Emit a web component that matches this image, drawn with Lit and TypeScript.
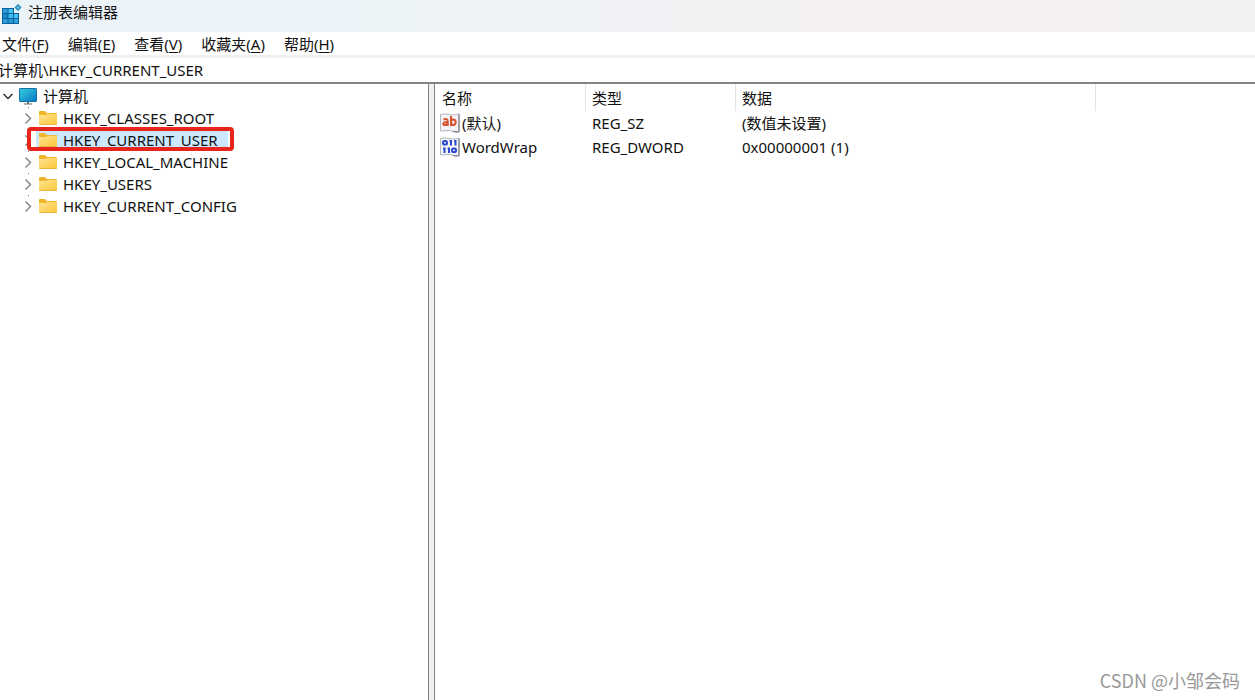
import { LitElement, html, svg, css } from "lit";
import { customElement, state } from "lit/decorators.js";

const appIcon = html`<svg class="app-icon" width="20" height="20" viewBox="0 0 20 20" aria-hidden="true">
  <path d="M0 4h12v5h5v11H0z" fill="#0b6299" />
  <path d="M1 5h4.500v4H1z" fill="#2b9ddd" /><path d="M6.500 5H11v4H6.500z" fill="#45c3f5" />
  <path d="M1 10h4.500v4H1z" fill="#1c86cc" /><path d="M6.500 10H11v4H6.500z" fill="#3fbdf2" /><path d="M12 10h4v4h-4z" fill="#46c4f6" />
  <path d="M1 15h4.500v4H1z" fill="#2c9fdf" /><path d="M6.500 15H11v4H6.500z" fill="#2794d6" /><path d="M12 15h4v4h-4z" fill="#2c9fdf" />
  <path d="M16 0l3.500 3.500L16 7l-3.500-3.500z" fill="#2380b5" /><path d="M16 1.800l1.700 1.700L16 5.200l-1.700-1.700z" fill="#6fc4e8" />
</svg>`;

const computerIcon = html`<svg width="18" height="18" viewBox="0 0 18 18" aria-hidden="true">
  <defs><linearGradient id="screen" x1="0" y1="0" x2="1" y2="1">
    <stop offset="0" stop-color="#35d0e0" /><stop offset="1" stop-color="#0c77c2" />
  </linearGradient></defs>
  <rect x=".5" y="1.500" width="17" height="13" rx=".6" fill="url(#screen)" stroke="#176fa4" />
  <path d="M8 15h2v1.500h3v1H5v-1h3z" fill="#68727b" />
</svg>`;

const folderIcon = html`<svg width="18" height="16" viewBox="0 0 18 16" aria-hidden="true">
  <defs><linearGradient id="folder" x1="0" y1="0" x2="1" y2="1">
    <stop offset="0" stop-color="#ffe391" /><stop offset="1" stop-color="#fbc73a" />
  </linearGradient></defs>
  <path d="M0 2q0-1 1-1h5l2 2h9q1 0 1 1v5H0z" fill="#efb52d" />
  <path d="M0 5h7l1.500-1H18v10q0 1-1 1H1q-1 0-1-1z" fill="url(#folder)" />
  <path d="M.5 14.500h17" stroke="#e7b33c" />
</svg>`;

const paper = svg`
  <path d="M.5 1.500Q5 .2 9 1.500T19 1v18q-3 1-6-.5T7 17.500t-6.500.5z" fill="#f3f4f7" stroke="#b4b7bd" />
  <path d="M19 1.500v17q-3 1-6-.5" fill="none" stroke="#82868d" stroke-width="1.300" />`;

const stringIcon = html`<svg width="20" height="20" viewBox="0 0 20 20" aria-hidden="true">
  ${paper}
  <g fill="none" stroke="#d9502f" stroke-width="2">
    <path d="M3.500 6.500q4.200-1.600 4.200 1.500V13" /><path d="M7.500 9q-4.200 0-4.200 1.700t2 1.400q2.200 0 2.200-2" />
    <path d="M11 3v10" /><ellipse cx="13.300" cy="9.300" rx="2.300" ry="2.700" />
  </g>
</svg>`;

const binaryIcon = html`<svg width="20" height="20" viewBox="0 0 20 20" aria-hidden="true">
  ${paper}
  <g fill="none" stroke="#2b48d0" stroke-width="2">
    <rect x="3" y="4" width="4" height="3.600" rx="1.600" />
    <path d="M11 3v5.500M15.500 3v5.500M4.500 10.500V16M9 10.500V16" />
    <path d="M9.500 4h1M14 4h1M3 11.500h1M7.500 11.500h1" stroke-width="1.500" />
    <rect x="12" y="11.500" width="4" height="3.600" rx="1.600" />
  </g>
</svg>`;

const chevronRight = html`<svg width="8" height="12" viewBox="0 0 8 12" aria-hidden="true">
  <path d="M1.500 1.500L6.500 6.500l-5 5" fill="none" stroke="#8b8b8b" stroke-width="1.500" /></svg>`;
const chevronDown = html`<svg width="12" height="8" viewBox="0 0 12 8" aria-hidden="true">
  <path d="M1.500 2L6 6.500 10.500 2" fill="none" stroke="#333" stroke-width="1.500" /></svg>`;

@customElement("app-root")
export class RegistryEditor extends LitElement {
  @state() private selected = "HKEY_CURRENT_USER";
  @state() private expanded = true;

  private menus = [["文件", "F"], ["编辑", "E"], ["查看", "V"], ["收藏夹", "A"], ["帮助", "H"]];
  private hives = ["HKEY_CLASSES_ROOT", "HKEY_CURRENT_USER", "HKEY_LOCAL_MACHINE", "HKEY_USERS", "HKEY_CURRENT_CONFIG"];
  private values = [
    { icon: stringIcon, name: "(默认)", type: "REG_SZ", data: "(数值未设置)" },
    { icon: binaryIcon, name: "WordWrap", type: "REG_DWORD", data: "0x00000001 (1)" },
  ];

  static styles = css`
    :host {
      display: flex; flex-direction: column; min-height: 100vh; position: relative;
      background: #fff; color: #111; overflow: hidden;
      font: 15px/22px "Noto Sans", "Noto Sans CJK SC", sans-serif;
    }
    *, *::before, *::after { box-sizing: border-box; }
    svg { display: block; flex: none; }
    button, input { font: inherit; color: inherit; background: none; border: 0; padding: 0; margin: 0; }
    .title {
      display: flex; align-items: flex-start; gap: 6px; height: 32px; padding: 2px 2px 0;
      background: linear-gradient(90deg, #eaf3f8 0%, #edf3f7 35%, #f5f0f2 70%, #f2f0f3 100%);
    }
    .app-icon { margin-top: 2px; }
    h1 { font: inherit; line-height: 20px; margin: 0; }
    .menu { display: flex; gap: 19px; height: 26px; padding: 1px 2px 0; border-bottom: 3px solid #f0f0f0; }
    .menu button { line-height: 22px; }
    .menu u { text-underline-offset: 2px; }
    .address { height: 26px; width: 100%; padding-bottom: 2px; text-indent: -2px; border-bottom: 2px solid #828287; outline: 0; }
    .panes { flex: 1; display: grid; grid-template-columns: 428px 7px minmax(0, 1fr); }
    .tree { padding: 0; }
    .tree ul { list-style: none; margin: 0; padding: 0; }
    .row { display: flex; align-items: center; height: 22px; }
    .root { gap: 5px; height: 23px; padding-left: 2px; }
    .root .label { padding-left: 1px; }
    .child { padding-left: 24px; position: relative; }
    .toggle { width: 12px; display: flex; justify-content: center; }
    .child .toggle { width: 8px; margin-right: 4px; }
    .child::before {
      content: ""; position: absolute; left: 28px; top: 0; width: 1px; height: 1px; background: #777;
    }
    .key { display: flex; align-items: center; gap: 6px; height: 22px; padding: 0 10px 0 3px; line-height: 20px; }
    .key span { padding-bottom: 1px; }
    .selected .key { background: #cce8ff; }
    .selected::after {
      content: ""; position: absolute; left: 27px; top: -2px; width: 207px; height: 24px;
      border: 4px solid #e8241c; border-radius: 4px; pointer-events: none;
    }
    .splitter { background: #f0f0f0; border: solid #828287; border-width: 0 1px; cursor: col-resize; }
    table { border-collapse: separate; border-spacing: 0; table-layout: fixed; width: 100%; }
    .c1 { width: 151px; }
    .c2 { width: 150px; }
    .c3 { width: 360px; }
    th { text-align: left; font-weight: 400; height: 27px; padding: 0 6px; border-right: 1px solid #e3e3e3; }
    th:first-child { padding-left: 7px; }
    th:last-child { border: 0; }
    td { height: 24px; padding: 0 6px; }
    td:first-child { padding-left: 5px; }
    .name { display: flex; align-items: center; gap: 2px; }
    .watermark {
      position: absolute; right: 15px; bottom: 9px; color: #999;
      font-family: "Noto Sans CJK SC", sans-serif; font-size: 18px;
    }
  `;

  render() {
    return html`
      <header class="title">${appIcon}<h1>注册表编辑器</h1></header>
      <nav class="menu">${this.menus.map(([t, k]) => html`<button>${t}(<u>${k}</u>)</button>`)}</nav>
      <input class="address" aria-label="地址" .value=${"计算机\\" + this.selected} />
      <main class="panes">
        <div class="tree">
          <div class="row root">
            <button class="toggle" aria-label="计算机" @click=${() => (this.expanded = !this.expanded)}>
              ${this.expanded ? chevronDown : chevronRight}
            </button>
            ${computerIcon}<span class="label">计算机</span>
          </div>
          <ul ?hidden=${!this.expanded}>
            ${this.hives.map((h) => html`
              <li class="row child ${h === this.selected ? "selected" : ""}">
                <button class="toggle" aria-label=${h}>${chevronRight}</button>
                <button class="key" @click=${() => (this.selected = h)}>${folderIcon}<span>${h}</span></button>
              </li>`)}
          </ul>
        </div>
        <div class="splitter"></div>
        <div>
          <table>
            <colgroup><col class="c1" /><col class="c2" /><col class="c3" /><col /></colgroup>
            <thead><tr><th>名称</th><th>类型</th><th>数据</th><th></th></tr></thead>
            <tbody>
              ${this.values.map((v) => html`<tr>
                <td><div class="name">${v.icon}<span>${v.name}</span></div></td>
                <td>${v.type}</td><td>${v.data}</td><td></td>
              </tr>`)}
            </tbody>
          </table>
        </div>
      </main>
      <div class="watermark">CSDN @小邹会码</div>
    `;
  }
}
